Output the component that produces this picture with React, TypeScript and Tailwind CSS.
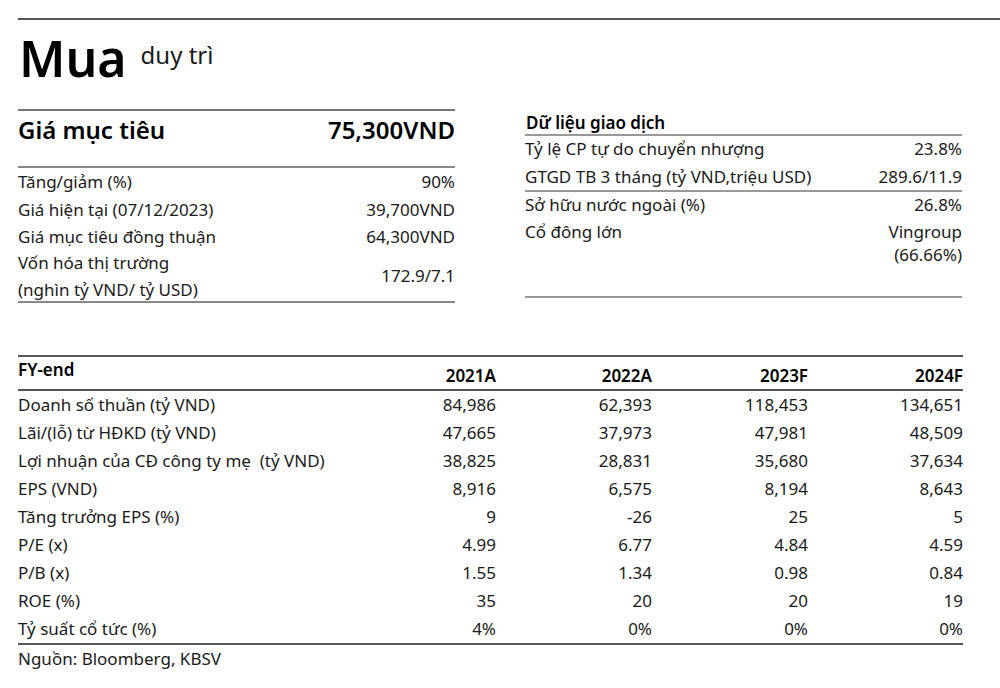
const font = { fontFamily: '"Noto Sans", "Liberation Sans", sans-serif' };

type KV = { label: React.ReactNode; value: React.ReactNode };

const leftRows: KV[] = [
  { label: 'Tăng/giảm (%)', value: '90%' },
  { label: 'Giá hiện tại (07/12/2023)', value: '39,700VND' },
  { label: 'Giá mục tiêu đồng thuận', value: '64,300VND' },
];

const years = ['2021A', '2022A', '2023F', '2024F'];

const table: { label: string; vals: string[] }[] = [
  { label: 'Doanh số thuần (tỷ VND)', vals: ['84,986', '62,393', '118,453', '134,651'] },
  { label: 'Lãi/(lỗ) từ HĐKD (tỷ VND)', vals: ['47,665', '37,973', '47,981', '48,509'] },
  { label: 'Lợi nhuận của CĐ công ty mẹ  (tỷ VND)', vals: ['38,825', '28,831', '35,680', '37,634'] },
  { label: 'EPS (VND)', vals: ['8,916', '6,575', '8,194', '8,643'] },
  { label: 'Tăng trưởng EPS (%)', vals: ['9', '-26', '25', '5'] },
  { label: 'P/E (x)', vals: ['4.99', '6.77', '4.84', '4.59'] },
  { label: 'P/B (x)', vals: ['1.55', '1.34', '0.98', '0.84'] },
  { label: 'ROE (%)', vals: ['35', '20', '20', '19'] },
  { label: 'Tỷ suất cổ tức (%)', vals: ['4%', '0%', '0%', '0%'] },
];

function Row({ label, value }: KV) {
  return (
    <div className="flex h-[27.5px] items-center justify-between">
      <span>{label}</span>
      <span>{value}</span>
    </div>
  );
}

export default function App() {
  return (
    <div className="h-[688px] w-[1000px] overflow-hidden bg-white text-[17px] text-[#1a1a1a]" style={{ ...font, whiteSpace: 'pre' }}>
      <div className="ml-[18px] mt-[18px] border-t-2 border-[#555]" />

      <div className="flex h-[89px] items-start pl-[19px] pt-[8px]">
        <span className="text-[50px] font-semibold leading-[60px] text-black">Mua</span>
        <span className="ml-[14px] mt-[12px] text-[24px] leading-[30px]">duy trì</span>
      </div>

      <div className="flex">
        {/* left block */}
        <div className="ml-[18px] w-[437px]">
          <div className="border-t-2 border-[#777]" />
          <div className="flex h-[55px] items-center justify-between pb-[17px] text-[24px] font-semibold text-black">
            <span>Giá mục tiêu</span>
            <span>75,300VND</span>
          </div>
          <div className="border-t-2 border-[#888]" />
          <div>
            {leftRows.map((r) => (
              <Row key={String(r.label)} {...r} />
            ))}
            <div className="flex h-[50px] items-center justify-between">
              <div className="flex flex-col leading-[27px]">
                <span>Vốn hóa thị trường</span>
                <span>(nghìn tỷ VND/ tỷ USD)</span>
              </div>
              <span>172.9/7.1</span>
            </div>
          </div>
          <div className="border-t-2 border-[#888]" />
        </div>

        {/* right block */}
        <div className="ml-[70px] w-[437px] pt-[2px]">
          <div className="flex h-[23px] items-center pl-[1px] font-semibold text-black">Dữ liệu giao dịch</div>
          <div className="border-t-2 border-[#999]" />
          <div className="-mt-[1px]">
            <Row label="Tỷ lệ CP tự do chuyển nhượng" value="23.8%" />
            <Row label="GTGD TB 3 tháng (tỷ VND,triệu USD)" value="289.6/11.9" />
          </div>
          <div className="border-t-2 border-[#999]" />
          <div className="-mt-[1px]">
            <Row label="Sở hữu nước ngoài (%)" value="26.8%" />
            <div className="flex h-[50px] justify-between pt-[1px] leading-[23px]">
              <span>Cổ đông lớn</span>
              <div className="flex flex-col items-end">
                <span>Vingroup</span>
                <span>(66.66%)</span>
              </div>
            </div>
          </div>
          <div className="mt-[27px] border-t-2 border-[#999]" />
        </div>
      </div>

      {/* forecast table */}
      <div className="ml-[18px] mt-[52px] w-[945px]">
        <div className="border-t-2 border-[#555]" />
        <div className="flex h-[32px] items-stretch font-semibold text-black">
          <div className="flex-1">FY-end</div>
          {years.map((y) => (
            <div key={y} className="flex w-[156px] items-end justify-end last:w-[155px]">
              {y}
            </div>
          ))}
        </div>
        <div className="border-t-2 border-[#555]" />
        {table.map((r) => (
          <div key={r.label} className="flex h-[28px] items-center">
            <div className="flex-1">{r.label}</div>
            {r.vals.map((v, i) => (
              <div key={i} className="w-[156px] text-right last:w-[155px]">
                {v}
              </div>
            ))}
          </div>
        ))}
        <div className="border-t-2 border-[#555]" />
        <div className="flex h-[28px] items-center">Nguồn: Bloomberg, KBSV</div>
      </div>
    </div>
  );
}
